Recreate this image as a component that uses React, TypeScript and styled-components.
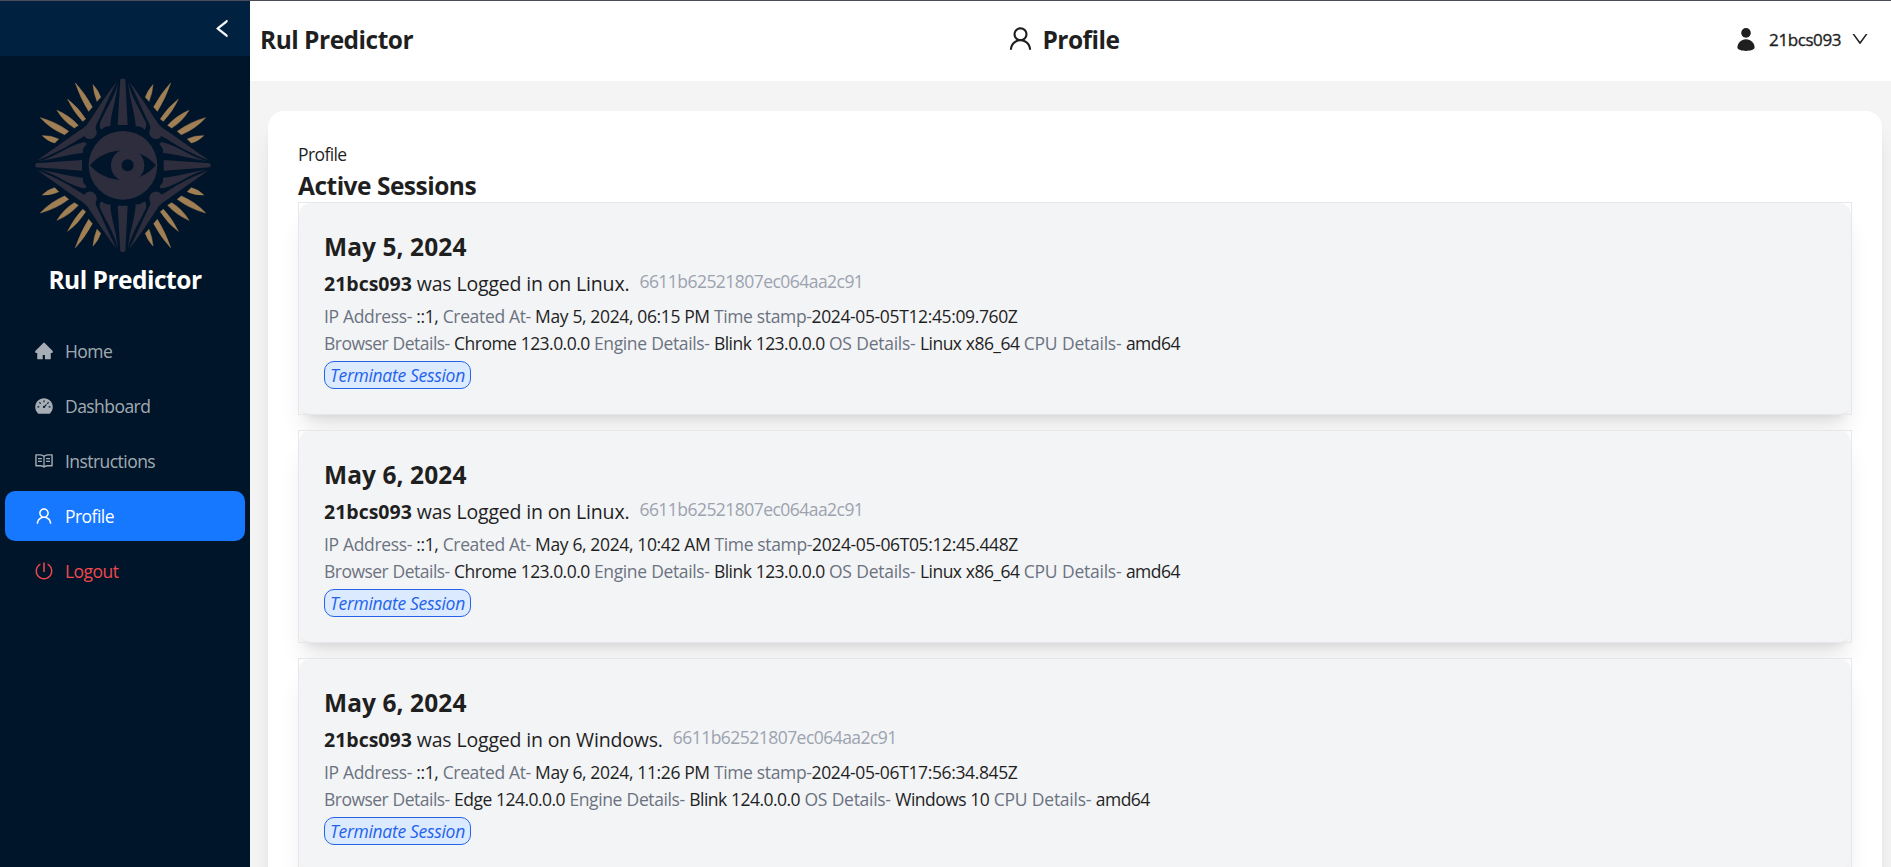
import React from "react";
import styled, { createGlobalStyle } from "styled-components";
import {
  AiFillHome,
  AiFillDashboard,
  AiOutlineRead,
  AiOutlineUser,
  AiOutlinePoweroff,
  AiOutlineLeft,
  AiOutlineDown,
} from "react-icons/ai";

const Global = createGlobalStyle`
  * { box-sizing: border-box; }
  body {
    margin: 0;
    overflow: hidden;
    background: #fff;
    color: #1f1f1f;
    font-family: "Open Sans", "Noto Sans", sans-serif;
  }
`;

const Page = styled.div`
  display: flex;
  height: 867px;
  overflow: hidden;
  border-top: 1px solid #474b5a;
`;

const Sider = styled.aside`
  width: 250px;
  flex: none;
  background: #001529;
  color: #fff;
`;

const Trigger = styled.div`
  height: 55px;
  background: #002140;
  display: flex;
  justify-content: flex-end;
  align-items: center;
  padding-right: 16px;
  svg {
    width: 23px;
    height: 23px;
    stroke: currentColor;
    stroke-width: 24px;
  }
`;

const Brand = styled.div`
  display: flex;
  flex-direction: column;
  align-items: center;
  padding: 22px 4px 0 0;
`;

const LogoSvg = styled.svg`
  display: block;
  width: 176px;
  height: 175px;
`;

const BrandName = styled.h1`
  margin: 11px 0 0 4px;
  font-size: 24.5px;
  line-height: 32px;
  font-weight: 700;
  letter-spacing: -0.5px;
  white-space: nowrap;
`;

const Menu = styled.nav`
  padding: 30px 5px 0;
  display: grid;
  gap: 5px;
`;

type Kind = "normal" | "active" | "danger";

const itemColor: Record<Kind, string> = {
  normal: "rgba(255, 255, 255, 0.65)",
  active: "#fff",
  danger: "#f0484d",
};

const Item = styled.a<{ $kind: Kind }>`
  height: 50px;
  display: flex;
  align-items: center;
  gap: 11px;
  padding-left: 29px;
  border-radius: 10px;
  font-size: 17.5px;
  letter-spacing: -0.55px;
  background: ${(p) => (p.$kind === "active" ? "#1677ff" : "transparent")};
  color: ${(p) => itemColor[p.$kind]};
  svg {
    width: 20px;
    height: 20px;
  }
`;

const Main = styled.main`
  flex: 1;
  min-width: 0;
  background: #f4f4f4;
`;

const Header = styled.header`
  height: 80px;
  background: #fff;
  display: grid;
  grid-template-columns: 1fr auto 1fr;
  align-items: center;
  padding: 0 21px 4px 10px;
`;

const Title = styled.h2`
  margin: 0;
  font-size: 24.5px;
  line-height: 36px;
  font-weight: 700;
  letter-spacing: -0.5px;
  white-space: nowrap;
`;

const HeaderTitle = styled(Title)`
  padding-top: 2px;
`;

const PageTitle = styled(HeaderTitle)`
  display: flex;
  align-items: center;
  gap: 7px;
  padding-right: 4px;
  svg {
    width: 29px;
    height: 29px;
    margin-bottom: 3px;
  }
`;

const User = styled.div`
  display: flex;
  justify-content: flex-end;
  align-items: center;
  font-size: 17px;
  letter-spacing: -0.42px;
  -webkit-text-stroke: 0.35px currentColor;
`;

const PersonSvg = styled.svg`
  width: 18px;
  height: 23px;
  margin-right: 14px;
`;

const Caret = styled(AiOutlineDown)`
  width: 20px;
  height: 20px;
  margin-left: 9px;
`;

const Panel = styled.section`
  margin: 30px 9px 0 18px;
  height: 1200px;
  background: #fff;
  border-radius: 16px;
  padding: 29px 30px;
  box-shadow: 0 20px 25px -5px rgba(0, 0, 0, 0.1), 0 8px 10px -6px rgba(0, 0, 0, 0.1);
`;

const Crumb = styled.div`
  font-size: 17.5px;
  line-height: 28px;
  letter-spacing: -0.6px;
`;

const SectionTitle = styled(Title)`
  margin-bottom: -2px;
`;

const CardFrame = styled.article`
  position: relative;
  height: 213px;
  margin-bottom: 15px;
  padding: 1px;
  &::after {
    content: "";
    position: absolute;
    inset: 0;
    border: 1px solid #e5e7eb;
    pointer-events: none;
  }
`;

const CardBody = styled.div`
  height: 100%;
  padding: 26px 25px 0;
  border-radius: 12px;
  background: #f3f4f6;
  box-shadow: 0 20px 25px -5px rgba(0, 0, 0, 0.1), 0 8px 10px -6px rgba(0, 0, 0, 0.1);
`;

const DateTitle = styled(Title)`
  letter-spacing: 0.08px;
`;

const Summary = styled.div`
  display: flex;
  align-items: baseline;
  margin-top: 4px;
  line-height: 30px;
  font-size: 19.5px;
  letter-spacing: -0.16px;
  white-space: pre;
  b {
    font-weight: 700;
    letter-spacing: 0;
  }
`;

const SessionId = styled.span`
  align-self: flex-start;
  margin-left: 10px;
  line-height: 25px;
  font-size: 17.5px;
  letter-spacing: -0.54px;
  color: #9ca3af;
`;

const Details = styled.div<{ $gap?: number; $track: number }>`
  margin-top: ${(p) => p.$gap ?? 0}px;
  line-height: 27px;
  font-size: 17.5px;
  letter-spacing: ${(p) => p.$track}px;
  white-space: pre;
`;

const DeviceDetails = styled(Details)`
  word-spacing: 0.35px;
`;

const Label = styled.span<{ $track: number }>`
  color: #6b7280;
  letter-spacing: ${(p) => p.$track}px;
`;

const Terminate = styled.button`
  display: block;
  margin-top: 4px;
  width: 147px;
  height: 28px;
  padding: 0 0 1px;
  border: 1px solid #2563eb;
  border-radius: 10px;
  background: #dbeafe;
  color: #2563eb;
  font: italic 400 17.5px/26px "Open Sans", "Noto Sans", sans-serif;
  letter-spacing: -0.3px;
  white-space: nowrap;
`;

const NAVY = "#001529";
const SLATE = "#2d2d3d";

function Quadrant() {
  return (
    <>
      <g fill="#a17f54" stroke="#a17f54" strokeWidth="1.5" strokeLinejoin="round">
        <path d="M227 249Q256 280 278 321L267 334Q243 296 227 249Z" />
        <path d="M280 254Q297 272 303 292L292 304Q282 280 280 254Z" />
        <path d="M204 298Q236 322 258 357L249 364Q222 336 204 298Z" />
        <path d="M172 331Q208 346 236 376L224 384Q192 365 172 331Z" />
        <path d="M122 353Q170 366 207 394L195 404Q152 386 122 353Z" />
        <path d="M128 407Q155 406 177 417L165 429Q143 423 128 407Z" />
      </g>
      <g fill={SLATE}>
        <path d="M352 245C330 268 295 325 262 374Q252 385 236 394L113 481C150 467 205 440 240 416Q250 411 254 408A20 20 0 1 0 288 386Q287 378 292 370C312 330 332 280 352 245Z" />
        <path d="M355 246C346 290 318 330 301 368C299 379 302 391 308 387C315 380 322 378 332 379C333 340 350 300 355 246Z" />
        <path d="M117 483C165 474 200 440 250 427C260 426 263 432 257 437C250 444 249 450 250 459C210 462 160 478 117 483Z" />
      </g>
    </>
  );
}

function Logo() {
  return (
    <LogoSvg viewBox="106 234 528 525" aria-hidden="true">
      <Quadrant />
      <g transform="translate(740 0) scale(-1 1)"><Quadrant /></g>
      <g transform="translate(0 992) scale(1 -1)"><Quadrant /></g>
      <g transform="translate(740 992) scale(-1 -1)"><Quadrant /></g>
      <g fill={SLATE}>
        <path d="M362 238Q369 233 377 238L384 375H354Z" />
        <path d="M362 754Q369 759 377 754L384 617H354Z" />
        <path d="M109 490Q105 496 109 502L247 512V480Z" />
        <path d="M631 490Q635 496 631 502L492 512V480Z" />
        <circle cx="370" cy="496" r="103" />
      </g>
      <path fill={NAVY} d="M271 496C320 437 420 437 468 496C420 555 320 555 271 496Z" />
      <circle cx="384" cy="496" r="50" fill={SLATE} />
      <circle cx="384" cy="496" r="18" fill={NAVY} />
    </LogoSvg>
  );
}

function Person() {
  return (
    <PersonSvg viewBox="0 0 18 23" fill="currentColor" aria-hidden="true">
      <circle cx="9" cy="4.9" r="4.8" />
      <path d="M.4 19.6C.5 14.8 4 11.2 9 11.2s8.5 3.6 8.6 8.4C17.6 22 13 22.9 9 22.9S.4 22 .4 19.6Z" />
    </PersonSvg>
  );
}

const menu: { label: string; icon: React.ReactNode; kind: Kind }[] = [
  { label: "Home", icon: <AiFillHome />, kind: "normal" },
  { label: "Dashboard", icon: <AiFillDashboard />, kind: "normal" },
  { label: "Instructions", icon: <AiOutlineRead />, kind: "normal" },
  { label: "Profile", icon: <AiOutlineUser />, kind: "active" },
  { label: "Logout", icon: <AiOutlinePoweroff />, kind: "danger" },
];

const sessions = [
  { date: "May 5, 2024", time: "06:15 PM", stamp: "2024-05-05T12:45:09.760Z", platform: "Linux", browser: "Chrome 123.0.0.0", engine: "Blink 123.0.0.0", os: "Linux x86_64" },
  { date: "May 6, 2024", time: "10:42 AM", stamp: "2024-05-06T05:12:45.448Z", platform: "Linux", browser: "Chrome 123.0.0.0", engine: "Blink 123.0.0.0", os: "Linux x86_64" },
  { date: "May 6, 2024", time: "11:26 PM", stamp: "2024-05-06T17:56:34.845Z", platform: "Windows", browser: "Edge 124.0.0.0", engine: "Blink 124.0.0.0", os: "Windows 10" },
];

function SessionCard({ s }: { s: (typeof sessions)[number] }) {
  return (
    <CardFrame>
      <CardBody>
        <DateTitle>{s.date}</DateTitle>
        <Summary>
          <b>21bcs093</b>
          <span>{` was Logged in on ${s.platform}.`}</span>
          <SessionId>6611b62521807ec064aa2c91</SessionId>
        </Summary>
        <Details $gap={4} $track={-0.37}>
          <Label $track={-0.34}>IP Address- </Label>::1, <Label $track={-0.34}>Created At- </Label>
          {`${s.date}, ${s.time} `}
          <Label $track={-0.35}>Time stamp-</Label>
          {s.stamp}
        </Details>
        <DeviceDetails $track={-0.54}>
          <Label $track={-0.52}>Browser Details- </Label>
          {`${s.browser} `}
          <Label $track={-0.38}>Engine Details- </Label>
          {`${s.engine} `}
          <Label $track={-0.28}>OS Details- </Label>
          {`${s.os} `}
          <Label $track={-0.25}>CPU Details- </Label>
          amd64
        </DeviceDetails>
        <Terminate>Terminate Session</Terminate>
      </CardBody>
    </CardFrame>
  );
}

export default function App() {
  return (
    <>
      <Global />
      <Page>
        <Sider>
          <Trigger><AiOutlineLeft /></Trigger>
          <Brand>
            <Logo />
            <BrandName>Rul Predictor</BrandName>
          </Brand>
          <Menu>
            {menu.map((m) => (
              <Item key={m.label} $kind={m.kind}>{m.icon}{m.label}</Item>
            ))}
          </Menu>
        </Sider>
        <Main>
          <Header>
            <HeaderTitle>Rul Predictor</HeaderTitle>
            <PageTitle><AiOutlineUser />Profile</PageTitle>
            <User><Person />21bcs093<Caret /></User>
          </Header>
          <Panel>
            <Crumb>Profile</Crumb>
            <SectionTitle>Active Sessions</SectionTitle>
            {sessions.map((s) => <SessionCard key={s.stamp} s={s} />)}
          </Panel>
        </Main>
      </Page>
    </>
  );
}
